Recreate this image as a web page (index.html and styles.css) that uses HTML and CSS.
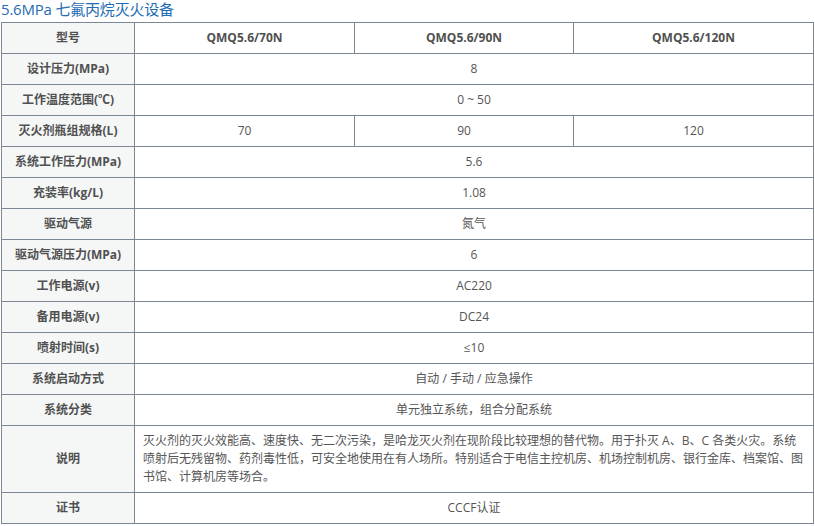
FILE: index.html
```html
<!DOCTYPE html>
<html lang="zh-CN">
<head>
<meta charset="utf-8">
<title>5.6MPa 七氟丙烷灭火设备</title>
<link rel="stylesheet" href="styles.css">
</head>
<body>
<div class="page">
  <h1 class="title">5.6MPa 七氟丙烷灭火设备</h1>
  <table class="spec">
    <colgroup>
      <col class="c-label">
      <col class="c-a">
      <col class="c-b">
      <col class="c-c">
    </colgroup>
    <tr class="head"><th>型号</th><th>QMQ5.6/70N</th><th>QMQ5.6/90N</th><th>QMQ5.6/120N</th></tr>
    <tr><th>设计压力(MPa)</th><td colspan="3">8</td></tr>
    <tr><th>工作温度范围(℃)</th><td colspan="3">0 ~ 50</td></tr>
    <tr><th>灭火剂瓶组规格(L)</th><td>70</td><td>90</td><td>120</td></tr>
    <tr><th>系统工作压力(MPa)</th><td colspan="3">5.6</td></tr>
    <tr><th>充装率(kg/L)</th><td colspan="3">1.08</td></tr>
    <tr><th>驱动气源</th><td colspan="3">氮气</td></tr>
    <tr><th>驱动气源压力(MPa)</th><td colspan="3">6</td></tr>
    <tr><th>工作电源(v)</th><td colspan="3">AC220</td></tr>
    <tr><th>备用电源(v)</th><td colspan="3">DC24</td></tr>
    <tr><th>喷射时间(s)</th><td colspan="3">≤10</td></tr>
    <tr><th>系统启动方式</th><td colspan="3">自动 / 手动 / 应急操作</td></tr>
    <tr><th>系统分类</th><td colspan="3">单元独立系统，组合分配系统</td></tr>
    <tr class="desc"><th>说明</th><td colspan="3">灭火剂的灭火效能高、速度快、无二次污染，是哈龙灭火剂在现阶段比较理想的替代物。用于扑灭 A、B、C 各类火灾。系统喷射后无残留物、药剂毒性低，可安全地使用在有人场所。特别适合于电信主控机房、机场控制机房、银行金库、档案馆、图书馆、计算机房等场合。</td></tr>
    <tr><th>证书</th><td colspan="3">CCCF认证</td></tr>
  </table>
</div>
</body>
</html>
```
FILE: styles.css
```css
html, body {
  margin: 0;
  padding: 0;
  background: #ffffff;
}
body {
  font-family: "Open Sans", "Noto Sans CJK SC", sans-serif;
  font-size: 12px;
  color: #555;
}
.page {
  padding: 0 0 0 1px;
}
.title {
  margin: 0;
  height: 22px;
  font-size: 15px;
  font-weight: normal;
  line-height: 19px;
  color: #1f6db3;
  letter-spacing: -0.2px;
}
.spec {
  border-collapse: collapse;
  table-layout: fixed;
  width: 812px;
}
.c-label { width: 133px; }
.c-a { width: 220px; }
.c-b { width: 219px; }
.c-c { width: 240px; }
.spec th,
.spec td {
  border: 1px solid #7b8792;
  height: 30px;
  padding: 0 8px;
  text-align: center;
  vertical-align: middle;
  line-height: 18px;
}
.spec th {
  background: #f5f7f7;
  font-weight: bold;
  color: #505050;
}
.spec tr.head th + th {
  background: #ffffff;
}
.spec td {
  background: #ffffff;
  color: #555;
}
.spec tr.desc td {
  text-align: left;
  height: 66px;
  padding: 0 8px;
}
```
